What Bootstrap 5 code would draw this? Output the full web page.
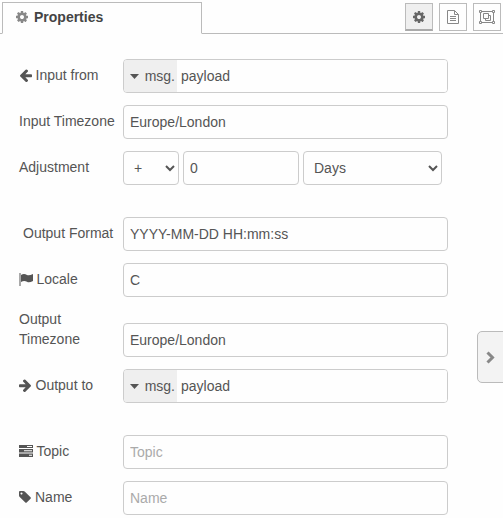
<!DOCTYPE html>
<html lang="en">
<head>
<meta charset="utf-8">
<meta name="viewport" content="width=device-width, initial-scale=1">
<title>Properties</title>
<link href="https://cdn.jsdelivr.net/npm/bootstrap@5.3.0/dist/css/bootstrap.min.css" rel="stylesheet">
<style>
body{font:14px/20px "Liberation Sans",Arial,sans-serif;color:#555;background:#fefefe;height:518px;overflow:hidden}
svg{fill:currentColor;flex:none;display:block}
.tabbar{height:34px;border-bottom:1px solid #bbb;padding:2px 2px 0}
.tabbar .nav-link{width:200px;height:32px;padding:4px 0 0 13px;border:1px solid #bbb;border-bottom-color:#fefefe;border-radius:0;color:#444;background:#fefefe;font-weight:700;line-height:20px;margin:0}
.tabbar .nav-link svg{color:#888;margin-right:6px}
.tools{gap:6px}
.tool{width:28px;height:28px;padding:0;border:1px solid #bbb;border-radius:0;color:#888;margin-top:1px}
.tool.active{background:#efefef;border-color:#bbb;border-bottom:2px solid #aaa;color:#666}
.fields{padding:25px 0 0 19px}
.field{display:flex;width:429px;margin-bottom:12px}
.field.spaced{margin-bottom:32px}
.field>label{width:104px;flex:none;padding-top:6px;white-space:nowrap}
.field>label.d-flex{align-items:flex-start}
.field>label svg{margin:4px 4px 0 0}
.field>label svg.snug{margin-right:3.5px}
.field>label.wrapped{padding:0 30px 8px 0;white-space:normal}
.form-control,.form-select{height:34px;border:1px solid #ccc;border-radius:4px;padding:0 6px 1px;font-size:14px;line-height:20px;color:#555;background-color:#fefefe}
.form-control::placeholder{color:#aaa}
.form-select{appearance:auto;background-image:none;padding:0 0 1px 6px}
.sign{width:56px;flex:none}
.amount{width:116px;flex:none}
.unit{width:139px;flex:none}
.typed{height:34px;border:1px solid #ccc;border-radius:4px;overflow:hidden;flex:1}
.typed .kind{width:53px;flex:none;background:#efefef;border:0;padding:0 2px 0 6px;color:#555;line-height:20px}
.typed .form-control{border:0;height:32px;padding:0 4px;border-radius:0}
.drawer{position:absolute;left:477px;top:331px;width:32px;height:52px;border:1px solid #bbb;border-radius:5px;background:#f3f3f3;color:#888;padding:0 0 0 8px}
</style>
</head>
<body>
<svg class="d-none">
<symbol id="cog" viewBox="128 128 1536 1536"><path d="M1152 896q0-106-75-181t-181-75-181 75-75 181 75 181 181 75 181-75 75-181zm512-109v222q0 12-8 23t-20 13l-185 28q-19 54-39 91 35 50 107 138 10 12 10 25t-9 23q-27 37-99 108t-94 71q-12 0-26-9l-138-108q-44 23-91 38-16 136-29 186-7 28-36 28h-222q-14 0-24.500-8.500t-11.500-21.500l-28-184q-49-16-90-37l-141 107q-10 9-25 9-14 0-25-11-126-114-165-168-7-10-7-23 0-12 8-23 15-21 51-66.500t54-70.500q-27-50-41-99l-183-27q-13-2-21-12.500t-8-23.500v-222q0-12 8-23t19-13l186-28q14-46 39-92-40-57-107-138-10-12-10-24 0-10 9-23 26-36 98.500-107.500t94.500-71.500q13 0 26 10l138 107q44-23 91-38 16-136 29-186 7-28 36-28h222q14 0 24.500 8.500t11.500 21.500l28 184q49 16 90 37l142-107q9-9 24-9 13 0 25 10 129 119 165 170 7 8 7 22 0 12-8 23-15 21-51 66.500t-54 70.500q26 50 41 98l183 28q13 2 21 12.500t8 23.500z"/></symbol>
<symbol id="arrow" viewBox="64 128 1600 1600"><path d="M1664 896v128q0 53-32.500 90.500t-84.500 37.500h-704l293 294q38 36 38 90t-38 90l-75 76q-37 37-90 37-52 0-91-37l-651-652q-37-37-37-90 0-52 37-91l651-650q38-38 91-38 52 0 90 38l75 74q38 38 38 91t-38 91l-293 293h704q52 0 84.500 37.500t32.500 90.500z"/></symbol>
</svg>

<header class="tabbar d-flex">
  <a class="nav-link active d-flex"><svg class="mt-1" width="12" height="12"><use href="#cog"/></svg>Properties</a>
  <div class="tools d-flex ms-auto">
    <button class="tool btn active d-flex align-items-center justify-content-center" aria-label="Properties"><svg width="12" height="12"><use href="#cog"/></svg></button>
    <button class="tool btn d-flex align-items-center justify-content-center" aria-label="Description"><svg width="12" height="14" viewBox="0 0 12 14"><path d="M.5.5h7l4 4v9H.5zM7.500.5v4h4M3 6.500h6M3 8.500h6M3 10.500h6" fill="none" stroke="currentColor"/></svg></button>
    <button class="tool btn d-flex align-items-center justify-content-center" aria-label="Appearance"><svg width="16" height="14" viewBox="0 0 16 14"><path d="M1.500 1.500h13v11h-13zM4.500 3.500h5v5h-5zM9.500 5.500h2v5h-5v-2" fill="none" stroke="currentColor"/><path d="M.5.5h2v2h-2zM13.500.5h2v2h-2zM.5 11.500h2v2h-2zM13.500 11.500h2v2h-2z" fill="#fefefe" stroke="currentColor"/></svg></button>
  </div>
</header>

<form class="fields">
  <div class="field"><label class="d-flex"><svg class="snug" width="13" height="13"><use href="#arrow"/></svg>Input from</label>
    <div class="typed d-flex"><button type="button" class="kind d-flex align-items-center"><svg width="9" height="5" viewBox="0 0 9 5"><path d="M0 0h9L4.500 5z"/></svg><span class="ms-auto">msg.</span></button><input class="form-control" value="payload"></div></div>
  <div class="field"><label>Input Timezone</label><input class="form-control" value="Europe/London"></div>
  <div class="field spaced"><label>Adjustment</label>
    <div class="d-flex gap-1 flex-fill"><select class="form-select sign"><option>+</option></select><input class="form-control amount" value="0"><select class="form-select unit"><option>Days</option></select></div></div>
  <div class="field"><label class="ps-1">Output Format</label><input class="form-control" value="YYYY-MM-DD HH:mm:ss"></div>
  <div class="field"><label class="d-flex"><svg class="snug" width="14" height="13" viewBox="0 0 14 13"><path d="M.5 0h1v13h-1zM2 2q3-2 6 0 2 1 6-1v7q-4 2-6 .7Q5 7 2 9z"/></svg>Locale</label><input class="form-control" value="C"></div>
  <div class="field align-items-end"><label class="wrapped">Output Timezone</label><input class="form-control" value="Europe/London"></div>
  <div class="field spaced"><label class="d-flex"><svg class="snug" width="13" height="13" viewBox="0 0 13 13"><use href="#arrow" width="13" height="13" transform="matrix(-1 0 0 1 13 0)"/></svg>Output to</label>
    <div class="typed d-flex"><button type="button" class="kind d-flex align-items-center"><svg width="9" height="5" viewBox="0 0 9 5"><path d="M0 0h9L4.500 5z"/></svg><span class="ms-auto">msg.</span></button><input class="form-control" value="payload"></div></div>
  <div class="field"><label class="d-flex"><svg class="snug" width="14" height="12" viewBox="0 0 14 12"><path fill-rule="evenodd" d="M0 0h14v3H0zM8 1v1h5V1zM0 4h14v3.500H0zM5 5.300v1h8v-1zM0 8.500h14V12H0zM10 9.800v1h3v-1z"/></svg>Topic</label><input class="form-control" placeholder="Topic"></div>
  <div class="field"><label class="d-flex"><svg width="12" height="12" viewBox="128 128 1536 1536"><path d="M576 448q0-53-37.500-90.500t-90.500-37.500-90.500 37.500-37.500 90.500 37.500 90.500 90.500 37.500 90.500-37.500 37.500-90.500zm1067 576q0 53-37 90l-491 492q-39 37-91 37-53 0-90-37l-715-716q-38-37-64.500-101t-26.500-117v-416q0-52 38-90t90-38h416q53 0 117 26.500t102 64.500l715 714q37 39 37 91z"/></svg>Name</label><input class="form-control" placeholder="Name"></div>
</form>
<button class="drawer d-flex align-items-center" aria-label="Toggle sidebar"><svg width="10" height="13" viewBox="0 0 10 13"><path d="M1.500 1.500l5 5-5 5" fill="none" stroke="currentColor" stroke-width="3"/></svg></button>
<script src="https://cdn.jsdelivr.net/npm/bootstrap@5.3.0/dist/js/bootstrap.bundle.min.js"></script>
</body>
</html>
